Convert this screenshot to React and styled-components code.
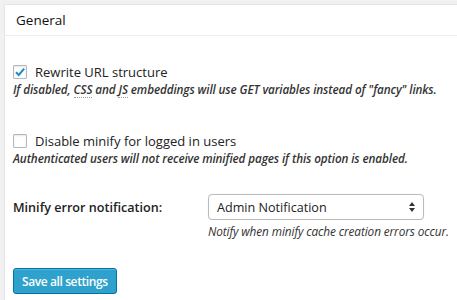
import styled, { createGlobalStyle } from "styled-components";

const GlobalStyle = createGlobalStyle`
  html, body {
    margin: 0;
    padding: 0;
    background: #f1f1f1;
    font-family: "Open Sans", "Liberation Sans", sans-serif;
    color: #222;
  }
`;

const Page = styled.div`
  padding: 4px 0 0 4px;
  height: 296px;
  overflow: hidden;
`;

const Panel = styled.div`
  background: #fff;
  border: 1px solid #e5e5e5;
  border-right: none;
  height: 100%;
`;

const PanelHeader = styled.h3`
  margin: 0;
  padding: 0 11px;
  height: 30px;
  display: flex;
  align-items: center;
  font-size: 13.5px;
  font-weight: 400;
  color: #111;
  border-bottom: 1px solid #eee;
`;

const Body = styled.div`
  padding: 28px 8px 0;
`;

const Option = styled.div`
  margin-bottom: ${(p) => p.$gap || 0}px;
`;

const CheckRow = styled.label`
  display: flex;
  align-items: center;
  gap: 8px;
  font-size: 13px;
  height: 16px;
`;

const Box = styled.span`
  width: 14px;
  height: 14px;
  box-sizing: border-box;
  border: 1px solid #b4b9be;
  border-radius: 1px;
  box-shadow: inset 0 1px 2px rgba(0, 0, 0, 0.1);
  background: #fff;
  display: flex;
  align-items: center;
  justify-content: center;
`;

const Description = styled.p`
  margin: 1px 0 0;
  font-size: 11.7px;
  font-style: italic;
  font-weight: 600;
  color: #333;
  letter-spacing: -0.1px;
  white-space: nowrap;
`;

const Abbr = styled.abbr`
  text-decoration: none;
  border-bottom: 1px dotted #999;
`;

const FieldRow = styled.div`
  display: flex;
  align-items: flex-start;
`;

const FieldLabel = styled.div`
  width: 195px;
  font-size: 12.6px;
  font-weight: 600;
  height: 26px;
  display: flex;
  align-items: center;
`;

const Select = styled.div`
  width: 216px;
  height: 26px;
  box-sizing: border-box;
  border: 1px solid #bbb;
  border-radius: 4px;
  box-shadow: 0 0 1px rgba(0, 0, 0, 0.15);
  display: flex;
  align-items: center;
  justify-content: space-between;
  padding: 0 8px;
  font-size: 12.6px;
`;

const FieldDesc = styled(Description)`
  font-weight: 400;
  font-size: 11.8px;
  margin-top: 3px;
`;

const Button = styled.button`
  margin-top: 29px;
  height: 26px;
  padding: 0 8px;
  background: #2ea2cc;
  border: 1px solid #0074a2;
  border-radius: 3px;
  box-shadow: inset 0 1px 0 rgba(120, 200, 230, 0.5);
  color: #fff;
  font-family: "Open Sans", "Liberation Sans", sans-serif;
  font-size: 12px;
  font-weight: 600;
  letter-spacing: -0.4px;
`;

const Check = () => (
  <svg width="12" height="12" viewBox="0 0 12 12">
    <path d="M2 6.2 L4.8 9 L10.2 2.6" fill="none" stroke="#1e8cbe" strokeWidth="2" />
  </svg>
);

const Arrows = () => (
  <svg width="6" height="10" viewBox="0 0 6 10">
    <path d="M3 0 L6 4 H0 Z M3 10 L6 6 H0 Z" fill="#333" />
  </svg>
);

export default function App() {
  return (
    <>
      <GlobalStyle />
      <Page>
        <Panel>
          <PanelHeader>General</PanelHeader>
          <Body>
            <Option $gap={36}>
              <CheckRow>
                <Box>
                  <Check />
                </Box>
                Rewrite URL structure
              </CheckRow>
              <Description>
                If disabled, <Abbr>CSS</Abbr> and <Abbr>JS</Abbr> embeddings will use GET
                variables instead of "fancy" links.
              </Description>
            </Option>
            <Option $gap={28}>
              <CheckRow>
                <Box />
                Disable minify for logged in users
              </CheckRow>
              <Description>
                Authenticated users will not receive minified pages if this option is enabled.
              </Description>
            </Option>
            <FieldRow>
              <FieldLabel>Minify error notification:</FieldLabel>
              <div>
                <Select>
                  Admin Notification
                  <Arrows />
                </Select>
                <FieldDesc>Notify when minify cache creation errors occur.</FieldDesc>
              </div>
            </FieldRow>
            <Button>Save all settings</Button>
          </Body>
        </Panel>
      </Page>
    </>
  );
}
